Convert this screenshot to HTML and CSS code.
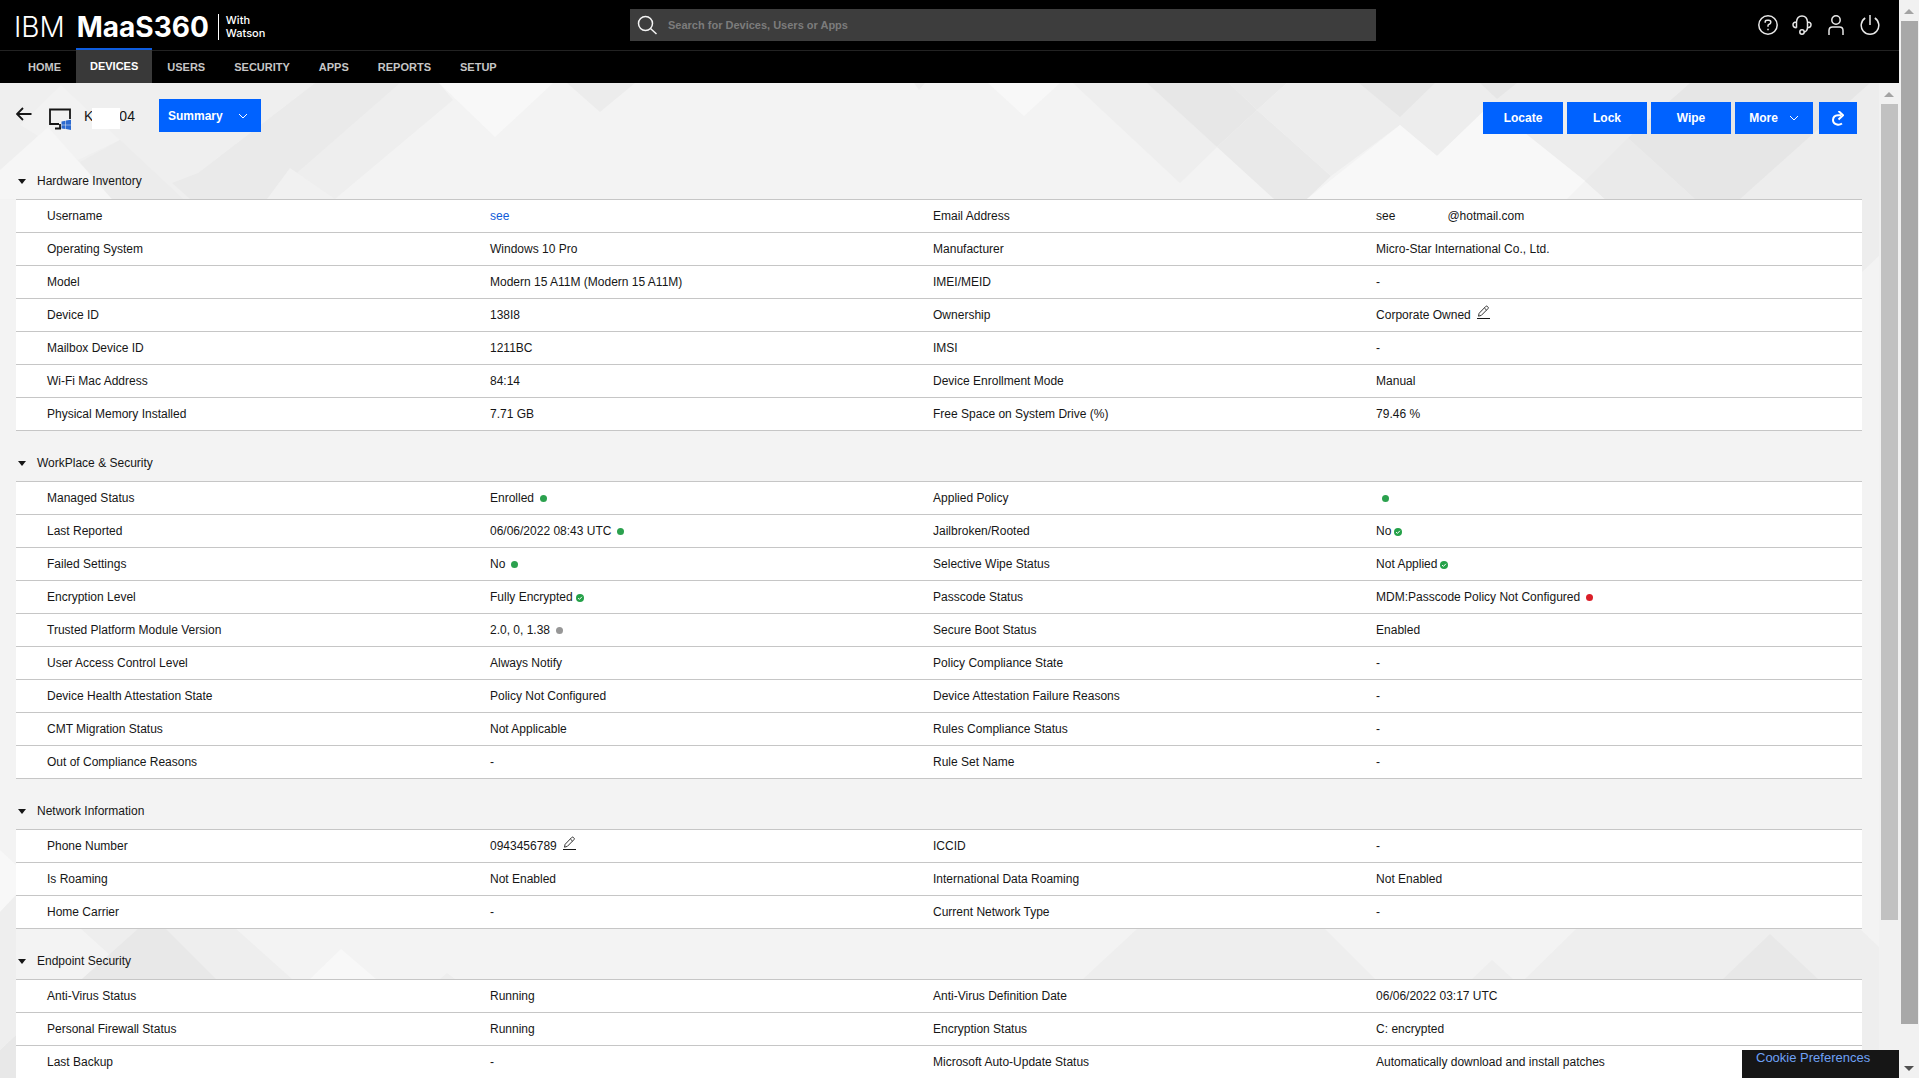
FILE: index.html
```html
<!DOCTYPE html>
<html lang="en">
<head>
<meta charset="utf-8">
<title>IBM MaaS360 - Device Summary</title>
<link rel="stylesheet" href="styles.css">
</head>
<body>
<svg class="defs" aria-hidden="true">
  <symbol id="chevron" viewBox="0 0 10 6"><path d="M1 1l4 4 4-4" fill="none" stroke="currentColor"/></symbol>
  <symbol id="check" viewBox="0 0 8 8"><circle cx="4" cy="4" r="4" fill="#24a148"/><path d="M2.1 4.1l1.3 1.3 2.5-2.6" fill="none" stroke="#fff"/></symbol>
  <symbol id="edit" viewBox="0 0 13 14"><path d="M0 13.5h13" stroke="#161616"/><path d="M1.5 11.2l.6-2.9 6.7-6.9q.8-.7 1.6 0l.6.6q.7.8 0 1.6l-6.7 6.800zM7.4 3l2.2 2.2" fill="none" stroke="#333"/></symbol>
</svg>
<div class="app">
  <header class="topbar">
    <a class="brand" href="#"><span class="brand-light">IBM</span><span class="brand-bold">MaaS360</span><span class="brand-sub">With<br>Watson</span></a>
    <form class="search" role="search">
      <svg class="search-icon" viewBox="0 0 20 20"><circle cx="8.500" cy="8.500" r="7" fill="none" stroke="#f4f4f4" stroke-width="1.500"/><path d="M13.500 13.500l6 5.500" stroke="#f4f4f4" stroke-width="1.500"/></svg>
      <input type="text" placeholder="Search for Devices, Users or Apps" aria-label="Search for Devices, Users or Apps">
    </form>
    <div class="tools">
      <button type="button" aria-label="Help"><svg viewBox="0 0 20 20"><circle cx="10" cy="10" r="9.200"/><path d="M7.200 7.700V7q0-1.700 1.800-1.700h1.800q2 0 2 2 0 1.700-1.600 2-1.200.2-1.200 1.400v1"/><path d="M10 13.700v1.600"/></svg></button>
      <button type="button" aria-label="Support"><svg viewBox="0 0 20 20"><path d="M4.500 12.700V7Q5 1 10 1t5.500 6v5.700M4.500 7Q1 7 1 9.800t3.500 2.900M15.500 7Q19 7 19 9.800t-3.500 2.900M15.500 12.500q-.3 4-3.500 4.500"/><circle cx="10" cy="17" r="2.200"/></svg></button>
      <button type="button" aria-label="Account"><svg viewBox="0 0 20 20"><circle cx="10" cy="5" r="4.200"/><path d="M3 20v-4.500Q3 12 6.500 12h7q3.500 0 3.500 3.500V20"/></svg></button>
      <button type="button" aria-label="Sign out"><svg viewBox="0 0 20 20"><path d="M10 0v10M5.200 3A8.800 8.800 0 1 0 14.800 3"/></svg></button>
    </div>
  </header>
  <nav class="nav">
    <a href="#">HOME</a><a class="active" href="#">DEVICES</a><a href="#">USERS</a><a href="#">SECURITY</a><a href="#">APPS</a><a href="#">REPORTS</a><a href="#">SETUP</a>
  </nav>
  <div class="pane">
    <svg class="facets" viewBox="0 83 1880 995" preserveAspectRatio="xMidYMin slice" aria-hidden="true">
      <path fill="#efefef" d="M0 83H315L198 173 215 199H0z"/>
      <path fill="#f2f2f2" d="M61 85L120 140 78 160 20 125z"/>
      <path fill="#f6f6f6" d="M0 170L48 127 112 199H0z"/>
      <path fill="#ececec" d="M120 140L183 199H112L80 162z"/>
      <path fill="#eee" d="M400 83H439L453 100 335 199H190L285 173z"/>
      <path fill="#eaeaea" d="M315 83H400L267 199H190L172 183 198 173z"/>
      <path fill="#f1f1f1" d="M290 168L335 199H267z"/>
      <path fill="#f8f8f8" d="M439 83H553L495 137zM988 83H1060L1024 116z"/>
      <path fill="#ececec" d="M567 83H635L600 112zM914 83H925L919 90z"/>
      <path fill="#eee" d="M1073 83H1147L1217 147 1180 183z"/>
      <path fill="#e7e7e7" d="M1147 83H1229L1257 110 1217 147z"/>
      <path fill="#e9e9e9" d="M1229 83H1287L1257 110zM1217 147L1257 110 1331 176 1307 199H1274z"/>
      <path fill="#ededed" d="M1287 83H1880V255L1862 272V199H1605L1585 181 1490 105 1437 156 1400 125 1331 176 1257 110z"/>
      <path fill="#e6e6e6" d="M1359 83H1435L1400 117zM1480 83H1517L1497 99zM1690 83H1870L1740 199H1695L1628 138z"/>
      <path fill="#eaeaea" d="M1628 138L1695 199H1605L1585 181z"/>
      <path fill="#f8f8f8" d="M1400 125L1437 156 1490 105 1585 181 1567 199H1307z"/>
      <path fill="#eee" d="M80 928H235L292 979H82L110 955z"/>
      <path fill="#e8e8e8" d="M139 928H165L216 979H82zM0 1050L16 1035V1078H0z"/>
      <path fill="#f8f8f8" d="M341 949L376 979H310zM0 850L16 865V895L0 912z"/>
      <path fill="#eee" d="M447 973L455 979H440zM1138 928H1324L1375 979H1083zM1492 960L1513 979H1472zM1577 928H1859L1880 948V1078H1862V979H1525zM0 912L16 895V1035L0 1050z"/>
      <path fill="#e8e8e8" d="M1770 934L1818 979H1723z"/>
    </svg>
    <main class="content">
      <div class="toolbar">
        <a class="back" href="#" aria-label="Back"><svg viewBox="0 0 16 14"><path d="M15.500 7H1.500M7 1L1 7l6 6" fill="none" stroke="#161616" stroke-width="1.800"/></svg></a>
        <svg class="device" viewBox="0 0 24 22"><path d="M11 16H2V1.500h20V11M12 16v4.500M7 20.500h6" fill="none" stroke="#161616" stroke-width="1.800"/><path d="M13.500 13.500l4-.7v3.900h-4zM18 12.600l5-.8v4.900h-5zM13.500 17.200h4v3.900l-4-.7zM18 17.200H23V22l-5-.9z" fill="#2d6bd0"/></svg>
        <h1 class="device-name"><span>K</span><span class="mask"></span><span>04</span></h1>
        <button class="btn summary" type="button">Summary<svg class="chevron"><use href="#chevron"/></svg></button>
        <div class="actions">
          <button class="btn" type="button">Locate</button>
          <button class="btn" type="button">Lock</button>
          <button class="btn" type="button">Wipe</button>
          <button class="btn more" type="button">More<svg class="chevron"><use href="#chevron"/></svg></button>
          <button class="btn refresh" type="button" aria-label="Refresh"><svg viewBox="0 0 12 15"><path d="M10 12.500Q7.500 14.200 5 13.500 1 12.500 1 9q.2-4.500 5-4.700h3" fill="none" stroke="#fff" stroke-width="2"/><path d="M6.500 0L11 4.300 6.500 8.500" fill="none" stroke="#fff" stroke-width="2"/></svg></button>
        </div>
      </div>

      <details class="section" open>
        <summary>Hardware Inventory</summary>
        <table>
          <tr><th>Username</th><td><a href="#">see</a></td><th>Email Address</th><td>see<span class="mask-inline"></span>@hotmail.com</td></tr>
          <tr><th>Operating System</th><td>Windows 10 Pro</td><th>Manufacturer</th><td>Micro-Star International Co., Ltd.</td></tr>
          <tr><th>Model</th><td>Modern 15 A11M (Modern 15 A11M)</td><th>IMEI/MEID</th><td>-</td></tr>
          <tr><th>Device ID</th><td>138I8</td><th>Ownership</th><td>Corporate Owned<button class="edit" type="button" aria-label="Edit ownership"><svg><use href="#edit"/></svg></button></td></tr>
          <tr><th>Mailbox Device ID</th><td>1211BC</td><th>IMSI</th><td>-</td></tr>
          <tr><th>Wi-Fi Mac Address</th><td>84:14</td><th>Device Enrollment Mode</th><td>Manual</td></tr>
          <tr><th>Physical Memory Installed</th><td>7.71 GB</td><th>Free Space on System Drive (%)</th><td>79.46 %</td></tr>
        </table>
      </details>

      <details class="section" open>
        <summary>WorkPlace &amp; Security</summary>
        <table>
          <tr><th>Managed Status</th><td>Enrolled<i class="dot"></i></td><th>Applied Policy</th><td><i class="dot"></i></td></tr>
          <tr><th>Last Reported</th><td>06/06/2022 08:43 UTC<i class="dot"></i></td><th>Jailbroken/Rooted</th><td>No<svg class="check"><use href="#check"/></svg></td></tr>
          <tr><th>Failed Settings</th><td>No<i class="dot"></i></td><th>Selective Wipe Status</th><td>Not Applied<svg class="check"><use href="#check"/></svg></td></tr>
          <tr><th>Encryption Level</th><td>Fully Encrypted<svg class="check"><use href="#check"/></svg></td><th>Passcode Status</th><td>MDM:Passcode Policy Not Configured<i class="dot red"></i></td></tr>
          <tr><th>Trusted Platform Module Version</th><td>2.0, 0, 1.38<i class="dot grey"></i></td><th>Secure Boot Status</th><td>Enabled</td></tr>
          <tr><th>User Access Control Level</th><td>Always Notify</td><th>Policy Compliance State</th><td>-</td></tr>
          <tr><th>Device Health Attestation State</th><td>Policy Not Configured</td><th>Device Attestation Failure Reasons</th><td>-</td></tr>
          <tr><th>CMT Migration Status</th><td>Not Applicable</td><th>Rules Compliance Status</th><td>-</td></tr>
          <tr><th>Out of Compliance Reasons</th><td>-</td><th>Rule Set Name</th><td>-</td></tr>
        </table>
      </details>

      <details class="section" open>
        <summary>Network Information</summary>
        <table>
          <tr><th>Phone Number</th><td>0943456789<button class="edit" type="button" aria-label="Edit phone number"><svg><use href="#edit"/></svg></button></td><th>ICCID</th><td>-</td></tr>
          <tr><th>Is Roaming</th><td>Not Enabled</td><th>International Data Roaming</th><td>Not Enabled</td></tr>
          <tr><th>Home Carrier</th><td>-</td><th>Current Network Type</th><td>-</td></tr>
        </table>
      </details>

      <details class="section" open>
        <summary>Endpoint Security</summary>
        <table>
          <tr><th>Anti-Virus Status</th><td>Running</td><th>Anti-Virus Definition Date</th><td>06/06/2022 03:17 UTC</td></tr>
          <tr><th>Personal Firewall Status</th><td>Running</td><th>Encryption Status</th><td>C: encrypted</td></tr>
          <tr><th>Last Backup</th><td>-</td><th>Microsoft Auto-Update Status</th><td>Automatically download and install patches</td></tr>
        </table>
      </details>
    </main>
    <div class="scrollbar inner" aria-hidden="true"><span class="arrow up"></span><span class="thumb"></span></div>
    <a class="cookie" href="#">Cookie Preferences</a>
  </div>
</div>
<div class="scrollbar outer" aria-hidden="true"><span class="arrow up"></span><span class="thumb"></span><span class="arrow down"></span></div>
</body>
</html>
```

FILE: styles.css
```css
* { box-sizing: border-box; }

body {
  margin: 0;
  height: 100vh;
  display: flex;
  overflow: hidden;
  background: #f3f3f3;
  color: #161616;
  font: 12px/16px "Liberation Sans", Arial, sans-serif;
}

a { text-decoration: none; }
button { font: inherit; border: 0; padding: 0; background: none; cursor: pointer; }
.defs { position: absolute; width: 0; height: 0; }

.app {
  flex: 1;
  min-width: 0;
  display: flex;
  flex-direction: column;
}

/* Top bar */
.topbar {
  height: 50px;
  flex: none;
  display: grid;
  grid-template-columns: 630fr 746fr 523fr;
  align-items: center;
  background: #000;
}
.brand {
  display: flex;
  align-items: center;
  padding: 4px 0 0 14px;
  color: #fff;
  font-family: Inter, sans-serif;
  font-size: 28px;
  line-height: 36px;
}
.brand-light { font-weight: 300; margin-right: 12px; }
.brand-bold { font-weight: 700; }
.brand-sub {
  margin-left: 9px;
  padding-left: 7px;
  border-left: 1px solid #fff;
  font: 500 11px/13px Inter, sans-serif;
}
.search {
  display: flex;
  align-items: center;
  height: 32px;
  background: #3d3d3d;
}
.search-icon { width: 20px; height: 20px; margin: 0 11px 0 7px; }
.search input {
  flex: 1;
  border: 0;
  padding: 0;
  outline: 0;
  background: none;
  color: #fff;
  font: 700 11px/16px "Liberation Sans", Arial, sans-serif;
}
.search input::placeholder { color: #7c7c7c; opacity: 1; }
.tools {
  display: flex;
  justify-content: flex-end;
  gap: 14px;
  padding-right: 19px;
}
.tools button { width: 20px; height: 20px; }
.tools svg {
  display: block;
  width: 20px;
  height: 20px;
  fill: none;
  stroke: #e8e8e8;
  stroke-width: 1.5;
}

/* Main navigation */
.nav {
  flex: none;
  display: flex;
  gap: 1px;
  height: 33px;
  padding-left: 14px;
  background: #000;
  border-top: 1px solid #222;
}
.nav a {
  padding: 0 14px;
  color: #c6c6c6;
  font-size: 11px;
  font-weight: 700;
  line-height: 33px;
}
.nav .active {
  margin-top: -3px;
  border-top: 2px solid #0f5ddf;
  background: #393939;
  color: #fff;
}

/* Scrollable pane */
.pane {
  position: relative;
  flex: 1;
  min-height: 0;
  display: flex;
  overflow: hidden;
}
.facets {
  position: absolute;
  inset: 0 19px 0 0;
  width: calc(100% - 19px);
  height: 100%;
}
.content {
  position: relative;
  flex: 1;
  min-width: 0;
  padding: 0 17px 0 16px;
}

.toolbar {
  display: flex;
  height: 66px;
  padding-top: 16px;
}
.back { width: 16px; height: 14px; margin: 8px 16px 0 0; }
.back svg { display: block; width: 16px; height: 14px; }
.device { width: 24px; height: 22px; margin: 9px 12px 0 0; }
.device-name {
  display: flex;
  margin: 0;
  width: 75px;
  font-size: 14px;
  font-weight: 400;
  line-height: 34px;
}
.mask { position: relative; width: 28px; height: 21px; margin: 9px -1px 0; background: #fff; }
.btn {
  display: flex;
  align-items: center;
  justify-content: center;
  width: 80px;
  height: 32px;
  background: #0062ff;
  color: #fff;
  font-weight: 700;
}
.chevron { width: 10px; height: 6px; margin-left: 11px; }
.summary { justify-content: flex-start; width: 102px; height: 33px; padding-left: 9px; }
.summary .chevron { margin-left: 15px; }
.actions { display: flex; gap: 4px; margin: 3px 5px 0 auto; }
.more { width: 78px; }
.refresh { width: 38px; margin-left: 2px; }
.refresh svg { width: 12px; height: 15px; }

/* Sections */
.section summary {
  display: flex;
  align-items: center;
  gap: 11px;
  height: 50px;
  padding: 14px 0 0 2px;
  list-style: none;
  cursor: pointer;
}
.section summary::before {
  content: "";
  border: 4px solid transparent;
  border-top: 5px solid #161616;
  border-bottom: 0;
}
table {
  width: 100%;
  table-layout: fixed;
  border-collapse: collapse;
  border-bottom: 1px solid #c6c6c6;
  background: #fff;
}
tr { height: 33px; border-top: 1px solid #c6c6c6; }
th, td { padding: 0; width: 24%; text-align: left; font-weight: 400; white-space: nowrap; }
th:first-child { width: 474px; padding-left: 31px; }
td:last-child { width: auto; }
td a { color: #0f5bd8; }

.mask-inline { display: inline-block; width: 52px; }
.dot {
  display: inline-block;
  width: 7px;
  height: 7px;
  margin-left: 6px;
  border-radius: 50%;
  background: #2ba14e;
}
.red { background: #da1e28; }
.grey { background: #979797; }
.check { width: 8px; height: 8px; margin-left: 3px; vertical-align: -1px; }
.edit { width: 13px; height: 14px; margin: -4px 0 0 6px; vertical-align: baseline; }
.edit svg { display: block; width: 13px; height: 14px; }

/* Scroll bars */
.scrollbar {
  position: relative;
  flex: none;
  display: flex;
  flex-direction: column;
  align-items: center;
  width: 20px;
  background: #f1f1f1;
}
.arrow { border: 5px solid transparent; }
.up { border-top: 0; border-bottom-color: #a3a3a3; margin: 9px 0 7px; }
.down { border-bottom: 0; border-top-color: #505050; margin: auto 0 7px; }
.thumb { width: 17px; }
.inner .thumb { height: 82%; background: #c1c1c1; }
.outer .thumb { height: 93%; background: #a8a8a8; }

.cookie {
  position: absolute;
  right: 0;
  bottom: 0;
  width: 157px;
  height: 28px;
  padding-left: 14px;
  background: #161616;
  color: #6ea1f5;
  font-size: 13px;
}
```
